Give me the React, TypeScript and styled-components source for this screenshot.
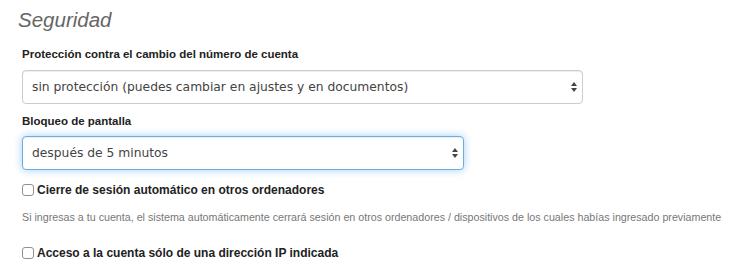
import React from "react";
import styled, { createGlobalStyle, css } from "styled-components";

const Global = createGlobalStyle`
  html, body { margin: 0; padding: 0; background: #fff; }
  body { font-family: "Liberation Sans", Arial, sans-serif; color: #333; }
`;

const Page = styled.div`
  padding: 9px 0 0 22px;
  width: 741px;
  box-sizing: border-box;
`;

const Heading = styled.h3`
  margin: 0 0 15px -4px;
  font-size: 20.5px;
  line-height: 22px;
  font-style: italic;
  font-weight: normal;
  color: #666;
`;

const FieldLabel = styled.label<{ $gap: number }>`
  display: block;
  font-size: 11.5px;
  line-height: 17px;
  font-weight: bold;
  color: #222;
  margin-bottom: ${(p) => p.$gap}px;
`;

const SelectBox = styled.div<{ $width: number; $focused?: boolean }>`
  box-sizing: border-box;
  width: ${(p) => p.$width}px;
  height: 34px;
  display: flex;
  align-items: center;
  justify-content: space-between;
  padding: 0 3px 0 9px;
  border: 1px solid #ccc;
  border-radius: 4px;
  background: #fff;
  font-family: "DejaVu Sans", "Open Sans", sans-serif;
  font-size: 12.3px;
  color: #444;
  box-shadow: inset 0 1px 1px rgba(0, 0, 0, 0.075);
  ${(p) =>
    p.$focused &&
    css`
      border-color: #66afe9;
      box-shadow: inset 0 1px 1px rgba(0, 0, 0, 0.075),
        0 0 8px rgba(102, 175, 233, 0.6);
    `}
`;

const Field = styled.div<{ $mb: number }>`
  margin-bottom: ${(p) => p.$mb}px;
`;

const CheckRow = styled.label`
  display: flex;
  align-items: center;
  gap: 3px;
  font-size: 12px;
  line-height: 18px;
  font-weight: bold;
  color: #222;
`;

const Box = styled.span`
  width: 10px;
  height: 10px;
  border: 1px solid #8f8f8f;
  border-radius: 3px;
  background: #fff;
  flex: none;
`;

const Help = styled.p`
  margin: 11px 0 19px;
  font-size: 10.7px;
  line-height: 15px;
  white-space: nowrap;
  color: #777;
`;

const Arrows = () => (
  <svg width="10" height="14" viewBox="0 0 10 14">
    <path d="M5 2 L8 6 L2 6 Z" fill="#444" />
    <path d="M5 12 L8 8 L2 8 Z" fill="#444" />
  </svg>
);

export default function App() {
  return (
    <>
      <Global />
      <Page>
        <Heading>Seguridad</Heading>
        <Field $mb={9}>
          <FieldLabel $gap={7}>Protección contra el cambio del número de cuenta</FieldLabel>
          <SelectBox $width={561}>
            <span>sin protección (puedes cambiar en ajustes y en documentos)</span>
            <Arrows />
          </SelectBox>
        </Field>
        <Field $mb={11}>
          <FieldLabel $gap={6}>Bloqueo de pantalla</FieldLabel>
          <SelectBox $width={442} $focused>
            <span>después de 5 minutos</span>
            <Arrows />
          </SelectBox>
        </Field>
        <CheckRow>
          <Box />
          Cierre de sesión automático en otros ordenadores
        </CheckRow>
        <Help>
          Si ingresas a tu cuenta, el sistema automáticamente cerrará sesión en otros ordenadores / dispositivos de los cuales habías ingresado previamente
        </Help>
        <CheckRow>
          <Box />
          Acceso a la cuenta sólo de una dirección IP indicada
        </CheckRow>
      </Page>
    </>
  );
}
